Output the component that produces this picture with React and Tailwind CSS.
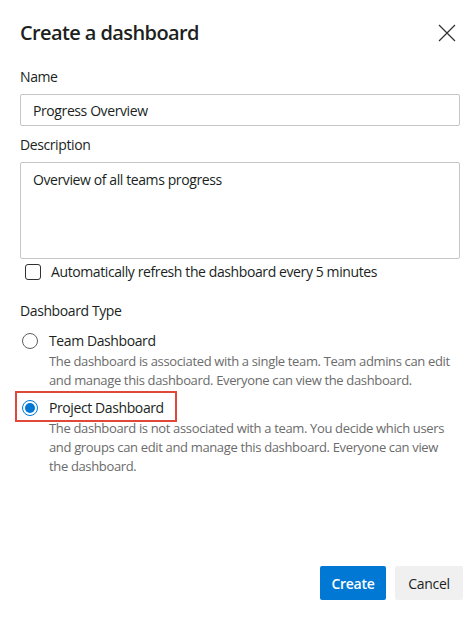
import { useState } from "react";

function CloseIcon() {
  return (
    <svg width="18" height="18" viewBox="0 0 18 18" fill="none">
      <path d="M1 1L17 17M17 1L1 17" stroke="#323130" strokeWidth="1.2" />
    </svg>
  );
}

function Radio({ checked }) {
  return checked ? (
    <span className="flex h-4 w-4 items-center justify-center rounded-full border border-[#0078d4] bg-white">
      <span className="h-[10px] w-[10px] rounded-full bg-[#0078d4]" />
    </span>
  ) : (
    <span className="h-4 w-4 rounded-full border border-[#605e5c] bg-white" />
  );
}

export default function App() {
  const [type, setType] = useState("project");

  const options = [
    {
      id: "team",
      label: "Team Dashboard",
      desc: "The dashboard is associated with a single team. Team admins can edit and manage this dashboard. Everyone can view the dashboard.",
    },
    {
      id: "project",
      label: "Project Dashboard",
      desc: "The dashboard is not associated with a team. You decide which users and groups can edit and manage this dashboard. Everyone can view the dashboard.",
    },
  ];

  return (
    <div
      className="relative flex h-[623px] w-[476px] flex-col bg-white text-[#201f1e]"
      style={{ fontFamily: '"Open Sans", "Noto Sans", sans-serif' }}
    >
      <div className="flex flex-col pl-5 pr-4 tracking-[-0.4px]">
        {/* header */}
        <div className="flex items-center justify-between pt-[19px]">
          <h1 className="text-[20px] leading-7 font-semibold tracking-[-0.6px]">Create a dashboard</h1>
          <button className="mr-[4px] text-[#323130]">
            <CloseIcon />
          </button>
        </div>

        <label className="mt-5 text-[14px] leading-5">Name</label>
        <input
          className="mt-[7px] h-8 rounded-[2px] border border-[#c8c6c4] px-3 text-[14px] outline-none"
          defaultValue="Progress Overview"
        />

        <label className="mt-[9px] text-[14px] leading-5">Description</label>
        <textarea
          className="mt-[7px] h-[97px] resize-none rounded-[2px] border border-[#c8c6c4] px-3 py-[7px] text-[14px] leading-5 outline-none"
          defaultValue="Overview of all teams progress"
        />

        <div className="mt-[5px] flex items-center gap-[10px] pl-[5px]">
          <span className="h-4 w-4 rounded-[3px] border border-[#323130] bg-white" />
          <span className="text-[14px] leading-4">Automatically refresh the dashboard every 5 minutes</span>
        </div>

        <div className="mt-[21px] text-[14px] leading-5">Dashboard Type</div>

        <div className="mt-[10px] flex flex-col gap-[8px]">
          {options.map((o) => (
            <div key={o.id} className="relative flex flex-col" onClick={() => setType(o.id)}>
              <div className="flex items-center gap-[11px] pl-[2px]">
                <Radio checked={type === o.id} />
                <span className="text-[14px] leading-5">{o.label}</span>
              </div>
              <p className="mt-[1px] pl-[29px] pr-2 text-[13px] leading-[19px] tracking-[-0.35px] text-[#6b6b6b]">{o.desc}</p>
              {o.id === "project" && (
                <div className="pointer-events-none absolute left-[-5px] top-[-7px] h-[31px] w-[162px] border-2 border-[#e0483a]" />
              )}
            </div>
          ))}
        </div>
      </div>

      <div className="mt-auto flex justify-end gap-[9px] pr-[13px] pb-[23px] tracking-[-0.3px]">
        <button className="h-[34px] w-[66px] rounded-[2px] bg-[#0078d4] text-[14px] font-semibold text-white">
          Create
        </button>
        <button className="h-[34px] w-[68px] rounded-[2px] bg-[#f0f0f0] text-[14px]">Cancel</button>
      </div>
    </div>
  );
}
